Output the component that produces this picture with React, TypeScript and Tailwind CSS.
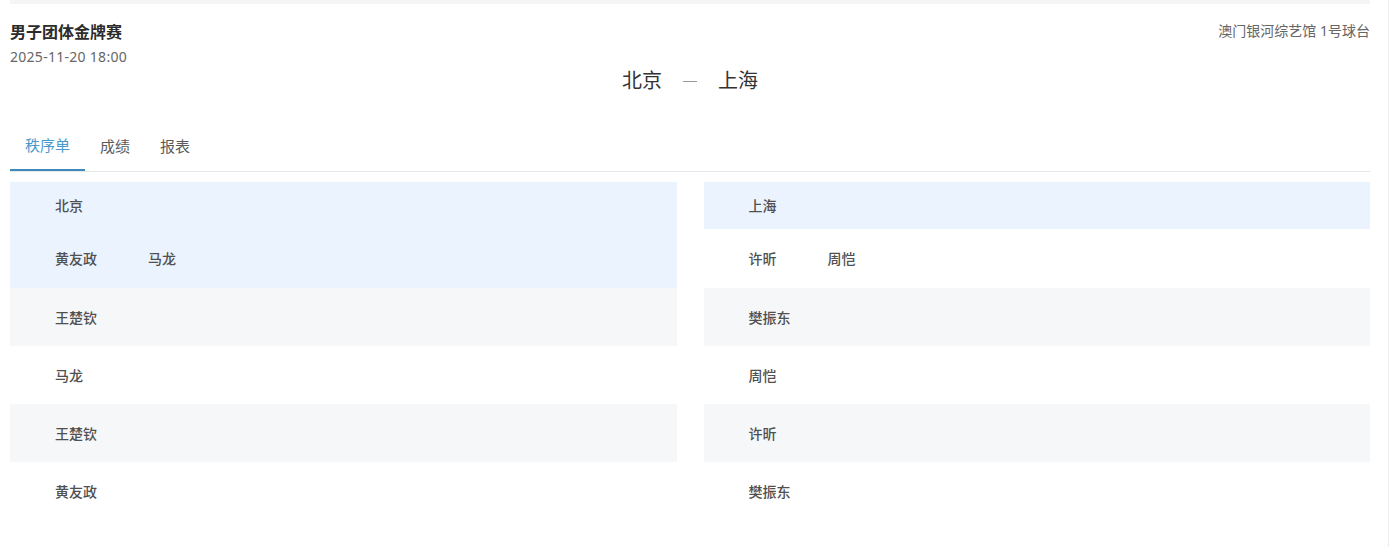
const font = {
  fontFamily: '"Noto Sans", "Noto Sans CJK SC", sans-serif',
};

type Row = { left: string[]; right: string[]; tone: "blue" | "gray" | "white" };

const rows: Row[] = [
  { left: ["王楚钦"], right: ["樊振东"], tone: "gray" },
  { left: ["马龙"], right: ["周恺"], tone: "white" },
  { left: ["王楚钦"], right: ["许昕"], tone: "gray" },
  { left: ["黄友政"], right: ["樊振东"], tone: "white" },
];

function Names({ names }: { names: string[] }) {
  return (
    <div className="flex gap-[51px] pl-[45px] text-[14px] font-medium text-[#505050]">
      {names.map((n) => (
        <span key={n}>{n}</span>
      ))}
    </div>
  );
}

function Cell({ names, tone, h }: { names: string[]; tone: string; h: string }) {
  const bg =
    tone === "blue" ? "bg-[#ebf3fe]" : tone === "gray" ? "bg-[#f6f7f9]" : "bg-white";
  return (
    <div className={`flex items-center ${h} ${bg}`}>
      <Names names={names} />
    </div>
  );
}

function Panel({ side }: { side: "left" | "right" }) {
  const isLeft = side === "left";
  return (
    <div className="flex flex-col">
      <Cell names={[isLeft ? "北京" : "上海"]} tone="blue" h="h-[47px]" />
      <Cell
        names={isLeft ? ["黄友政", "马龙"] : ["许昕", "周恺"]}
        tone={isLeft ? "blue" : "white"}
        h="h-[59px]"
      />
      {rows.map((r, i) => (
        <Cell key={i} names={isLeft ? r.left : r.right} tone={r.tone} h="h-[58px]" />
      ))}
    </div>
  );
}

export default function App() {
  return (
    <div className="h-[547px] w-[1391px] overflow-hidden bg-white pr-[2px]" style={font}>
      <div className="h-full w-[1389px] border-r border-[#e9eeee]">
        <div className="ml-[10px] w-[1360px]">
          {/* top strip */}
          <div className="h-[4px] bg-[#f5f5f5]" />

          {/* match header */}
          <div className="mt-[18px] flex items-start justify-between">
            <div>
              <div className="text-[16px] leading-[20px] font-semibold text-[#2b2b2b]">男子团体金牌赛</div>
              <div className="mt-[6px] text-[14px] leading-[18px] tracking-[0.02em] text-[#666]">
                2025-11-20 18:00
              </div>
            </div>
            <div className="text-[14px] leading-[18px] text-[#666]">澳门银河综艺馆 1号球台</div>
          </div>

          <div className="mt-[1px] flex items-center justify-center text-[20px] leading-[28px] text-[#333]">
            <span>北京</span>
            <span className="mx-[21px] h-px w-[14px] bg-[#999]" />
            <span>上海</span>
          </div>

          {/* tabs */}
          <div className="mt-[27px] flex border-b border-[#e4e7ed]">
            <div className="-mb-px flex h-[49px] items-center border-b-2 border-[#3d8ab8] px-[15px] text-[15px] text-[#4a9acb]">
              秩序单
            </div>
            <div className="flex h-[49px] items-center px-[15px] text-[15px] text-[#5a5a5a]">成绩</div>
            <div className="flex h-[49px] items-center px-[15px] text-[15px] text-[#5a5a5a]">报表</div>
          </div>

          {/* lineup */}
          <div className="mt-[10px] grid grid-cols-2 gap-[27px]">
            <Panel side="left" />
            <Panel side="right" />
          </div>
        </div>
      </div>
    </div>
  );
}
